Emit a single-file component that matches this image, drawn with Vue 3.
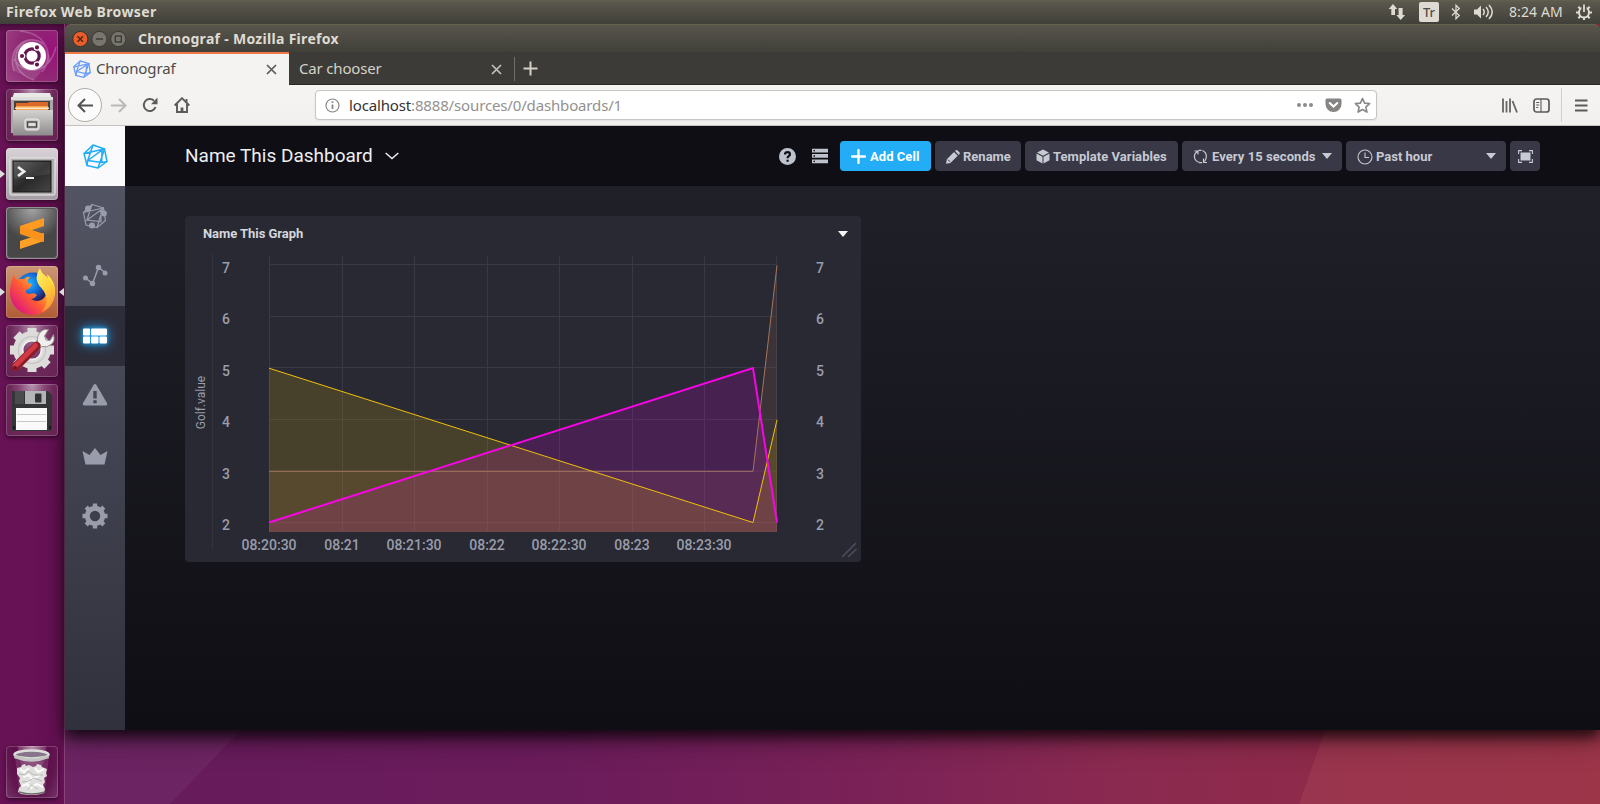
<script setup>
const xs = [269.5, 342.5, 414.5, 487.5, 559.5, 632.5, 704.5, 776.5]
const ys = [264.5, 316.5, 367.5, 419.5, 471, 522.5]
const yLabels = [7, 6, 5, 4, 3, 2].map((value, i) => ({ value, y: 272.5 + i * 51.5 }))
const xLabels = ['08:20:30', '08:21', '08:21:30', '08:22', '08:22:30', '08:23', '08:23:30']
  .map((text, i) => ({ text, x: xs[i] - 0.5 }))

const series = [
  { name: 'tan', color: '#a5755e', fill: '#a77150', width: 1, points: '269,471.3 753,471.3 777,265.5' },
  { name: 'pink', color: '#f904e6', fill: '#f600f6', width: 2, points: '269,522.5 753,368 777,522.5' },
  { name: 'gold', color: '#f2c00c', fill: '#f6c800', width: 1, points: '269,368.2 753,522.5 777,419.8' }
]
const strokes = [series[0], series[2], series[1]]

const navItems = ['hosts', 'data', 'boards', 'alerts', 'crown', 'gear']
const apps = ['dash', 'files', 'terminal', 'sublime', 'firefox', 'settings', 'disk']
</script>

<template>
  <div class="desktop">
    <svg class="wallpaper" width="1600" height="804" viewBox="0 0 1600 804">
      <defs>
        <linearGradient id="wall" x1="0" x2="1">
          <stop offset="0" stop-color="#651b5b" /><stop offset=".35" stop-color="#6b1c5b" />
          <stop offset=".55" stop-color="#7b2257" /><stop offset=".7" stop-color="#8b2a50" />
          <stop offset="1" stop-color="#932a42" />
        </linearGradient>
      </defs>
      <rect width="1600" height="804" fill="url(#wall)" />
      <path d="M0 700H270L170 804H0Z" fill="#fff" opacity=".045" />
      <path d="M1336 700H1600V804H1299Z" fill="#b04b55" opacity=".36" />
    </svg>

    <header class="panel">
      <span class="panel-title">Firefox Web Browser</span>
      <div class="tray">
        <svg width="18" height="18" viewBox="0 0 18 18" fill="#dfdbd2"><path d="M5 1L9.300 6H7v6H3.300V6H.7ZM12.700 17L8.300 12h2.300V5h4v7h2.500Z" /></svg>
        <span class="kbd">Tr</span>
        <svg class="bt" width="10" height="16" viewBox="0 0 10 16" fill="none" stroke="#dfdbd2" stroke-width="1.3"><path d="M1 4.500L8.300 11.500 5 14.700V1.300L8.300 4.500 1 11.500" /></svg>
        <svg class="vol" width="21" height="18" viewBox="0 0 21 18" fill="none" stroke="#dfdbd2" stroke-width="1.500"><path d="M1 6.500h3l4-4v13l-4-4H1Z" fill="#dfdbd2" stroke="none" /><path d="M10 6q2.500 3 0 6M13 4q4.500 5 0 10M16 2q6.500 7 0 14" /></svg>
        <span class="clock">8:24 AM</span>
        <svg width="16" height="16" viewBox="0 0 16 16" fill="none" stroke="#dfdbd2" stroke-width="2"><circle cx="8" cy="8.500" r="5" /><path d="M8 1v7" stroke="#504e47" stroke-width="5" /><path d="M8 .5v7.500" stroke-width="1.800" /><path d="M0 8.500h3M13 8.500h3M8 13v3M2.300 2.800l2 2M13.700 2.800l-2 2M2.300 14.200l2-2M13.700 14.200l-2-2" /></svg>
      </div>
    </header>

    <div class="workspace">
      <aside class="launcher">
        <div v-for="app in apps" :key="app" class="tile" :class="app">
          <svg width="52" height="52" viewBox="0 0 52 52">
            <defs v-if="app === 'dash'">
              <linearGradient id="metal" x2="0" y2="1"><stop stop-color="#d4d3d2" /><stop offset="1" stop-color="#8d8b8b" /></linearGradient>
              <linearGradient id="black" x2="1" y2="1"><stop stop-color="#565656" /><stop offset=".5" stop-color="#292929" /><stop offset="1" stop-color="#454545" /></linearGradient>
              <linearGradient id="fox" x1=".9" y1=".1" x2=".1" y2=".8"><stop stop-color="#fff04a" /><stop offset=".3" stop-color="#ffa92a" /><stop offset=".6" stop-color="#ff5a35" /><stop offset="1" stop-color="#e0187c" /></linearGradient>
              <radialGradient id="globe" cx=".4" cy=".3"><stop stop-color="#25b7ff" /><stop offset=".6" stop-color="#1262d1" /><stop offset="1" stop-color="#29205f" /></radialGradient>
              <linearGradient id="flame" x2=".4" y2="1"><stop stop-color="#fff36b" /><stop offset=".6" stop-color="#ffcf3a" /><stop offset="1" stop-color="#ff9a39" /></linearGradient>
              <radialGradient id="gloss" cx=".5" cy="0" r=".65"><stop stop-color="#fff" stop-opacity=".5" /><stop offset="1" stop-color="#fff" stop-opacity="0" /></radialGradient>
            </defs>
            <template v-if="app === 'dash'">
              <g fill="none" stroke="#fff" stroke-opacity=".22" stroke-width="1.500"><path d="M8 41C0 20 20 1 38 14M14 1C42 4 49 27 36 42M50 17C43 44 19 47 8 29M28 50C5 44 4 16 23 10" /></g>
              <path d="M8 41C0 20 20 1 38 14L45 30 28 50Z" fill="#fff" opacity=".12" />
              <circle cx="26" cy="26" r="14" fill="#fff" />
              <circle cx="26" cy="26" r="7.200" fill="none" stroke="#651650" stroke-width="3.200" />
              <g fill="#651650" stroke="#fff" stroke-width="1.200"><circle cx="16" cy="26" r="2.700" /><circle cx="31" cy="17.400" r="2.700" /><circle cx="31" cy="34.600" r="2.700" /></g>
            </template>
            <template v-else-if="app === 'files'">
              <path d="M8 4h36l3 9H5Z" fill="#e9e9e8" /><path d="M5 9h42v35H5Z" fill="#a9a8a7" /><path d="M5 8h42v3H5Z" fill="#dededd" />
              <path d="M8 12h36v10H8Z" fill="#45413e" /><path d="M10 14h12l1-1h19v8H10Z" fill="#dc692c" /><path d="M10 17h32v5H10Z" fill="#f7a54d" /><path d="M9 18.500h34v1.500H9Z" fill="#fae9cf" />
              <path d="M7 21h40v25.500H7Z" fill="url(#metal)" /><rect x="19" y="30" width="14" height="11" rx="2" fill="#c9c8c7" stroke="#eee" /><rect x="21.500" y="33" width="9" height="5" fill="#ddd" stroke="#4b4947" stroke-width="1.500" />
            </template>
            <template v-else-if="app === 'terminal'">
              <rect x="4" y="10" width="45" height="37" rx="1.500" fill="#b1aeae" stroke="#eee" /><rect x="7" y="13" width="38" height="31" fill="url(#black)" stroke="#161616" />
              <path d="M8 14h36v12L8 31Z" fill="#fff" opacity=".08" /><path d="M12 19l6 4.500-6 4.500" fill="none" stroke="#eee" stroke-width="2.800" /><path d="M20 30h8" stroke="#eee" stroke-width="2" />
            </template>
            <template v-else-if="app === 'sublime'">
              <rect x="1.500" y="1.500" width="49" height="49" rx="3" fill="#474747" stroke="#5c5658" /><rect x="2" y="2" width="48" height="48" rx="3" fill="url(#gloss)" />
              <path d="M14 19L38 11V19L14 27Z" fill="#ff9c20" /><path d="M14 34L38 26V34L14 42Z" fill="#ffa126" /><path d="M14 19v8l24 8v-8Z" fill="#fb921b" />
            </template>
            <template v-else-if="app === 'firefox'">
              <circle cx="27" cy="25" r="18.500" fill="url(#globe)" />
              <path d="M8 8q1 4 3 6 4-2 7-1 3-3 6-2-3 3-2 6 2 1 4 1-1 4-6 6-1 4 4 4 4-2 7 1-3 4-6 4 6 4 12 0 6-6 6-16L41 8q9 8 8 20-3 20-23 21Q7 47 4 29q-.500-11 4-21Z" fill="url(#fox)" />
              <path d="M34 2q1 5 6 8 8 7 8.500 17-1 14-13 19 8-9 4-17-1-4-6-9-6-8 .5-18Z" fill="url(#flame)" />
            </template>
            <template v-else-if="app === 'settings'">
              <g stroke="#dddcdb" fill="none"><circle cx="26" cy="25" r="13.700" stroke-width="10" /><path d="M26 3v8M26 39v8M4 25h8M40 25h8M10.500 9.500l6 6M35.500 34.500l6 6M10.500 40.500l6-6" stroke-width="9" /></g>
              <circle cx="26" cy="25" r="13.500" fill="none" stroke="#c5c4c4" stroke-width="1.200" /><circle cx="26" cy="25" r="9.500" fill="none" stroke="#f3f3f2" stroke-width="1.500" />
              <path d="M29 22.500L37 14.500" stroke="#8d8c8b" stroke-width="7.500" /><path d="M31.500 18q-1-8 4-12 3-2.500 7-1.500l-4 6.500 1.500 4 4 .5 3.500-6q2 7-2.500 10-4 3.500-9 2l-4 3.500-4-4Z" fill="#f0efee" stroke="#8b8888" stroke-width=".9" />
              <path d="M9.500 42L30.500 21" stroke="#8c1d28" stroke-width="8.500" stroke-linecap="round" /><path d="M9 41L29.500 20.500" stroke="#cf3a43" stroke-width="5" stroke-linecap="round" />
              <circle cx="9" cy="42.500" r="1.800" fill="#691525" />
            </template>
            <template v-else-if="app === 'disk'">
              <path d="M6 7h36l4 4v36H6Z" fill="#343537" /><path d="M19 7h21v13H19Z" fill="#b4b5b7" /><rect x="29" y="9.500" width="6.500" height="9" rx="1" fill="#303236" /><path d="M9 7h9v13H9Z" fill="#494b4d" />
              <path d="M10 24h31v22H10Z" fill="#fafafa" /><path d="M11 30.500h29M11 37.500h29" stroke="#c8c8c8" /><path d="M8 42v3M44 42v3" stroke="#000" />
            </template>
          </svg>
          <i v-if="app === 'terminal' || app === 'firefox'" class="pip" />
          <i v-if="app === 'firefox'" class="pip right" />
        </div>
        <div class="tile trash">
          <svg width="52" height="52" viewBox="0 0 52 52">
            <path d="M9 10h34l-4 35q-1 3-13 3t-13-3Z" fill="#8c4f7d" opacity=".45" />
            <path d="M11 22l4-1 1-2 3-1 1 2 3-1 4 2 3-1 1-2 4 1 1 2 5 2-1 4 1 3-3 2 1 4-2 3 2 4-1 4-3 1q-8 2-20 0l-3-2 1-4 2-2-2-5 1-3-3-4Z" fill="#dfe0dd" />
            <g fill="none" stroke="#fafaf9" stroke-width="2.200"><path d="M14 23l4 3 5-4M29 22l3 4 6-3M17 31l6-2 3 4 8-4M16 40l5-2 4 4 6-4 6 3M20 35l4 1" /></g>
            <path d="M13 28l6 1 3-4 6 4 9 0M16 36l7-1 5-3 8 3M22 44l3-5 7 4" fill="none" stroke="#b9bab6" stroke-width="1" />
            <path d="M13 46q13 4 26 0" fill="none" stroke="#6e6e6c" stroke-width="1.500" />
            <ellipse cx="25.500" cy="8.500" rx="17" ry="4" fill="#87768a" stroke="#dedddc" stroke-width="2.500" /><path d="M8.500 10.500q17 7 34 0" fill="none" stroke="#c4c5c3" stroke-width="3.500" />
          </svg>
        </div>
      </aside>

      <main class="window">
        <div class="titlebar">
          <svg width="56" height="18" viewBox="0 0 56 18">
            <circle cx="8.300" cy="9" r="7.600" fill="#e95c2c" stroke="#34332e" /><path d="M5.500 6.200l5.500 5.500m0-5.500l-5.500 5.500" stroke="#552311" stroke-width="1.500" />
            <circle cx="27.400" cy="9" r="7.600" fill="#77756c" stroke="#3a3934" /><path d="M24 9h7" stroke="#393833" stroke-width="1.400" />
            <circle cx="46.300" cy="9" r="7.600" fill="#77756c" stroke="#3a3934" /><rect x="43.300" y="6" width="6" height="6" fill="none" stroke="#393833" stroke-width="1.300" />
          </svg>
          <span>Chronograf - Mozilla Firefox</span>
        </div>

        <div class="tabs">
          <div class="tab current">
            <svg width="18" height="18" viewBox="0 0 25 25" fill="none" stroke="#6b9dfc" stroke-width="1.800">
              <path d="M10 1.300L22 5l2 12.500-9 6.500-11-2.500-3-12Z" /><path d="M1 10l21-5-7 19M19 7L5 16l13 3ZM10 1.300L5 16l-1 6M24 17.500l-6 1.500" />
            </svg>
            <span>Chronograf</span>
            <svg class="close" width="11" height="11" viewBox="0 0 11 11" stroke="#5b5a57" stroke-width="1.700"><path d="M1 1l9 9M10 1l-9 9" /></svg>
          </div>
          <div class="tab">
            <span class="other">Car chooser</span>
            <svg class="close" width="11" height="11" viewBox="0 0 11 11" stroke="#c4c0b8" stroke-width="1.700"><path d="M1 1l9 9M10 1l-9 9" /></svg>
          </div>
          <svg class="plus" width="15" height="15" viewBox="0 0 15 15" stroke="#d3cfc7" stroke-width="2"><path d="M7.500 .5v14M.5 7.500h14" /></svg>
        </div>

        <div class="toolbar">
          <div class="back"><svg width="17" height="15" viewBox="0 0 17 15" fill="none" stroke="#555452" stroke-width="2"><path d="M16 7.500H2M8 1L1.500 7.500 8 14" /></svg></div>
          <svg class="forward" width="17" height="15" viewBox="0 0 17 15" fill="none" stroke="#bab9b6" stroke-width="2"><path d="M1 7.500h14M9 1l6.500 6.500L9 14" /></svg>
          <svg class="reload" width="16" height="16" viewBox="0 0 16 16" fill="none" stroke="#5c5b58" stroke-width="2"><path d="M13.500 10A6 6 0 1 1 12 3.700" /><path d="M15.500 .5v6.800H9Z" fill="#5c5b58" stroke="none" /></svg>
          <svg class="home" width="16" height="16" viewBox="0 0 16 16" fill="none" stroke="#5c5b58" stroke-width="1.900"><path d="M.7 8.500L8 1.200l7.300 7.300M3 7v8h10V7" /><path d="M8 15v-4.500" stroke-width="2.800" /><path d="M12.500 2v3" /></svg>
          <div class="address">
            <svg width="15" height="15" viewBox="0 0 15 15" fill="none" stroke="#8a8988" stroke-width="1.200"><circle cx="7.500" cy="7.500" r="6.500" /><path d="M7.500 6.500V11M7.500 3.300V5" stroke-width="1.800" /></svg>
            <span class="url"><b>localhost</b>:8888/sources/0/dashboards/1</span>
            <svg class="dots" width="16" height="4" viewBox="0 0 16 4" fill="#8c8b8a"><circle cx="2" cy="2" r="2" /><circle cx="8" cy="2" r="2" /><circle cx="14" cy="2" r="2" /></svg>
            <svg class="pocket" width="17" height="15" viewBox="0 0 17 15"><path d="M2 .5h13Q16.500 .5 16.500 2v4a8 8 0 0 1-16 0V2Q.5.500 2 .5Z" fill="#858483" /><path d="M4.700 5l3.800 3.600L12.300 5" fill="none" stroke="#fff" stroke-width="2" stroke-linecap="round" /></svg>
            <svg width="17" height="17" viewBox="0 0 17 17" fill="none" stroke="#8a8988" stroke-width="1.700"><path d="M8.500 1.500l2.100 4.600 5 .6-3.700 3.400 1 5-4.400-2.500-4.400 2.500 1-5L1.400 6.700l5-.6Z" stroke-linejoin="round" /></svg>
          </div>
          <div class="nav-tools">
            <svg width="16" height="15" viewBox="0 0 16 15" fill="none" stroke="#656462" stroke-width="1.800"><path d="M1 .5v14M4.500 3v11.500M8 .5v14M10.500 3l4.500 11.500" /></svg>
            <svg width="17" height="15" viewBox="0 0 17 15" fill="none" stroke="#5c5b59" stroke-width="1.700"><rect x="1" y="1" width="15" height="13" rx="2.500" /><path d="M8 1v13M3.200 4.500h3M3.200 7h3M3.200 9.500h2" stroke-width="1.100" /></svg>
            <i />
            <svg width="13" height="13" viewBox="0 0 13 13" stroke="#5c5b59" stroke-width="2"><path d="M0 1.500h12.500M0 6.500h12.500M0 11.500h12.500" /></svg>
          </div>
        </div>

        <div class="app">
          <nav class="sidebar">
            <div class="brand">
              <svg width="25" height="25" viewBox="0 0 25 25" fill="none" stroke="#22adf6" stroke-width="1.500" stroke-linejoin="round">
                <path d="M10 1L21.500 5l2.500 12.500-9 6.500-11-2.500L1 9.500Z" /><path d="M1 9.500l20.500-4.500-6.500 19M19 6.200L4.700 16.500l14 2ZM10 1L4.700 16.500 4 21.500M24 17.500l-5.500 1" />
              </svg>
            </div>
            <div v-for="item in navItems" :key="item" class="nav-item" :class="{ active: item === 'boards' }">
              <svg width="26" height="26" viewBox="0 0 26 26" fill="#999dab">
                <g v-if="item === 'hosts'"><path d="M10 1.500L21.500 5l2 12.500-8.500 7-11-2.500L1.500 9.500ZM1.500 9.500L21 5l-6 19.500M19 7L5 17l14 1.500ZM10 1.500L5 17" fill="none" stroke="#999dab" stroke-width="1.200" /><circle cx="6" cy="5.500" r="3" /><circle cx="22" cy="10.500" r="2.900" /><circle cx="10" cy="22.500" r="3" /></g>
                <g v-else-if="item === 'data'"><path d="M3.500 15l7 5.500 6-16 6.500 5" fill="none" stroke="#999dab" stroke-width="1.500" /><circle cx="3.500" cy="15" r="2.500" /><circle cx="10.500" cy="20.500" r="2.700" /><circle cx="16.500" cy="4.500" r="2.700" /><circle cx="23" cy="10" r="2.500" /></g>
                <g v-else-if="item === 'boards'" fill="#fff"><rect x="1" y="5.500" width="7" height="7" rx="1" /><rect x="9" y="5.500" width="16" height="7" rx="1" /><rect x="1" y="13.500" width="7" height="7" rx="1" /><rect x="9" y="13.500" width="7.500" height="7" rx="1" /><rect x="17.500" y="13.500" width="7.500" height="7" rx="1" /></g>
                <g v-else-if="item === 'alerts'"><path d="M13 1q1 0 1.600 1.200L25.200 20.500q.5 2-1.500 2H2.300q-2 0-1.500-2L11.400 2.200Q12 1 13 1Z" /><path d="M11.300 8h3.400v7.500h-3.400Zm0 9.200h3.400v3h-3.400Z" fill="#444753" /></g>
                <path v-else-if="item === 'crown'" d="M.5 8l7 4L13 5l5.500 7 7-4-3 13.500h-19Z" />
                <g v-else><circle cx="13" cy="13" r="7.700" fill="none" stroke="#999dab" stroke-width="5" /><path v-for="n in 8" :key="n" d="M10.800 .5h4.400v5h-4.400Z" :transform="`rotate(${n * 45} 13 13)`" /></g>
              </svg>
            </div>
          </nav>

          <section class="content">
            <header class="board-head">
              <h1>Name This Dashboard</h1>
              <svg class="chev" width="14" height="8" viewBox="0 0 14 8" fill="none" stroke="#eeeff2" stroke-width="1.500"><path d="M.7 1L7 6.500 13.300 1" /></svg>
              <div class="actions">
                <svg class="help" width="17" height="17" viewBox="0 0 17 17"><circle cx="8.500" cy="8.500" r="8.500" fill="#bec2cc" /><path d="M6 6.500q.2-2.300 2.600-2.300 2.300 0 2.300 2 0 1.200-1.200 1.900-1.100.700-1.100 2.200M8.600 11.700v2" fill="none" stroke="#0f0e15" stroke-width="2.200" /></svg>
                <svg class="list" width="16" height="16" viewBox="0 0 16 16"><path d="M0 .7h16v3.800H0ZM0 6h16v3.800H0Zm0 5.500h16v3.800H0Z" fill="#bec2cc" /><path d="M1.500 2.600H3M1.500 8H3m-1.500 5.400H3" stroke="#0f0e15" stroke-width="1.400" /></svg>
                <button class="btn add"><svg width="15" height="15" viewBox="0 0 15 15" stroke="#fff" stroke-width="2.300" stroke-linecap="round"><path d="M7.500 1v13M1 7.500h13" /></svg>Add Cell</button>
                <button class="btn rename"><svg width="14" height="14" viewBox="0 0 14 14" fill="#c6cad3"><path d="M0 13.700l.8-4.500L8 2.100l3.700 3.700L4.500 12.900ZM9 1.100l.6-.6q1-.9 2 0l1.800 1.800q.9 1 0 2l-.7.6Z" /><path d="M2 9.700l2 2" stroke="#383846" /></svg>Rename</button>
                <button class="btn template"><svg width="14" height="15" viewBox="0 0 14 15" fill="#c6cad3"><path d="M7 .5l6 3-6 3.300-6-3.300ZM.5 4.600l6 3.200v6.700l-6-3.300ZM13.500 4.600v6.600l-6 3.300V7.800Z" /></svg>Template Variables</button>
                <button class="btn every"><svg width="15" height="15" viewBox="0 0 15 15" fill="none" stroke="#c6cad3" stroke-width="1.200"><path d="M5 2q-5 3-3 8 2 3.500 5.500 3.500M9.500 1.500q5 2.500 3.500 8l-1.500 3M1.500 2H5v3.500M14 13.500h-3.500v-4M5.500 1.300h3M6 13.600h3" /></svg>Every 15 seconds<i class="caret" /></button>
                <button class="btn hour"><svg width="16" height="16" viewBox="0 0 16 16" fill="none" stroke="#c6cad3" stroke-width="1.100"><circle cx="8" cy="8" r="7" /><path d="M8 3.500V8.500h4" /></svg>Past hour<i class="caret" /></button>
                <button class="btn full"><svg width="15" height="13" viewBox="0 0 15 13"><path d="M2.500 2.500h10v8h-10Z" fill="#c6cad3" /><path d="M.6 4V.6H4M11 .6h3.400V4M.6 9v3.400H4M14.400 9v3.400H11" fill="none" stroke="#c6cad3" stroke-width="1.100" /></svg></button>
              </div>
            </header>

            <div class="grid">
              <article class="cell">
                <div class="cell-head"><span>Name This Graph</span><i class="caret" /></div>
                <svg class="chart" width="676" height="310" viewBox="185 252 676 310">
                  <path d="M212.500 254V550" stroke="#32323e" stroke-width="1.500" />
                  <g stroke="#383846">
                    <line v-for="y in ys" :key="y" x1="269" x2="777" :y1="y" :y2="y" />
                    <line v-for="x in xs" :key="x" :x1="x" :x2="x" y1="256" y2="531" />
                  </g>
                  <polygon v-for="s in series" :key="s.name" :points="`269,531.500 ${s.points} 777,531.500`" :fill="s.fill" fill-opacity=".15" />
                  <path d="M269 531.500h508" stroke="#8b5a50" stroke-opacity=".55" />
                  <polyline v-for="s in strokes" :key="s.name" :points="s.points" fill="none" :stroke="s.color" :stroke-width="s.width" />
                  <g class="labels">
                    <template v-for="l in yLabels" :key="l.value">
                      <text x="226" :y="l.y" text-anchor="middle">{{ l.value }}</text>
                      <text x="820" :y="l.y" text-anchor="middle">{{ l.value }}</text>
                    </template>
                    <text v-for="l in xLabels" :key="l.text" :x="l.x" y="550" text-anchor="middle">{{ l.text }}</text>
                    <text class="axis" text-anchor="middle" transform="translate(204.700 402.500) rotate(-90)">Golf.value</text>
                  </g>
                  <path d="M842 557L856 543M848 557L856.500 549" stroke="#4c4c5b" stroke-width="1.700" />
                </svg>
              </article>
            </div>
          </section>
        </div>
      </main>
    </div>
  </div>
</template>

<style>
body { margin: 0; overflow: hidden; }
</style>

<style scoped>
.desktop { position: relative; width: 1600px; height: 804px; overflow: hidden; font-family: "Noto Sans", "Open Sans", sans-serif; box-sizing: border-box; }
.desktop *, .desktop *::before { box-sizing: border-box; }
svg { display: block; flex: none; }
.wallpaper { position: absolute; inset: 0; }
.panel { position: relative; z-index: 3; height: 24px; display: flex; align-items: center; justify-content: space-between; padding: 0 8px 0 6px; background: linear-gradient(#64614f 0, #5b584d 2px, #403f39 100%); color: #dfdbd2; }
.panel-title { font-size: 14px; font-weight: 700; letter-spacing: .38px; line-height: 24px; }
.tray { display: flex; align-items: center; }
.kbd { width: 20px; height: 20px; margin: 0 -1px 0 13px; border-radius: 2px; background: #dfdbd2; color: #504d47; font-size: 13px; font-weight: 500; line-height: 20px; text-align: center; }
.bt { margin-left: 13px; }
.vol { margin-left: 12px; }
.clock { width: 54px; margin: -2px 13px 0 15px; font-size: 14px; letter-spacing: .1px; white-space: nowrap; }
.workspace { position: relative; height: 780px; display: flex; }
.launcher { width: 65px; height: 780px; padding: 6px 6px; display: flex; flex-direction: column; gap: 7px; background: linear-gradient(#0005, transparent 8px), linear-gradient(90deg, #671255, #651153); border-right: 1px solid #8a4479; }
.tile { position: relative; width: 52px; height: 52px; border-radius: 4px; background: radial-gradient(ellipse at 50% 0, #b795ae 0, #864676 35%, #6b2859 60%, #662352); box-shadow: inset 0 0 0 1px #ffffff30, 0 2px 4px #0007; }
.tile.dash { background: radial-gradient(circle at 85% 40%, #98117a, #8e2b74 60%, #a04587); }
.tile.terminal { background: linear-gradient(#d8d3d7, #a49ca4); }
.tile.sublime { background: #777; }
.tile.firefox { background: linear-gradient(#cc9674, #af5c35); }
.tile.trash { margin-top: auto; background: radial-gradient(ellipse at 50% 0, #b795ae, #7a3267 38%, #5c0d4b 40%, #62164f 70%, #75356a); }
.pip { position: absolute; left: -6px; top: 22px; border: solid transparent; border-width: 4px 0 4px 5px; border-left-color: #ddd; }
.pip.right { left: auto; right: -6px; border-width: 4px 5px 4px 0; border-right-color: #ddd; }
.window { width: 1535px; height: 706px; border-radius: 6px 6px 0 0; display: flex; flex-direction: column; box-shadow: 0 7px 14px 0 #000b, 0 12px 30px #0004; }
.titlebar { height: 28px; padding: 1px 0 0 7px; display: flex; align-items: center; gap: 10px; border-radius: 6px 6px 0 0; border-top: 1px solid #66634f; background: linear-gradient(#58554c, #403f39); color: #dfdbd2; font-size: 14px; font-weight: 700; letter-spacing: .3px; white-space: nowrap; }
.titlebar svg { margin-top: -1px; }
.titlebar span { margin-top: -2px; }
.tabs { height: 33px; display: flex; align-items: center; background: #3c3b37; border-bottom: 1px solid #282723; }
.tab { width: 226px; height: 33px; margin-bottom: -1px; display: flex; align-items: center; border-right: 1px solid #6f6e69; color: #d5d1c8; font-size: 15px; letter-spacing: -.18px; }
.tab:not(.current) { height: 24px; margin-top: 1px; }
.tab.current { width: 224px; padding: 0 0 1px 8px; border-top: 2px solid #f07746; border-right: 0; background: #f4f3f2; color: #4c4b48; letter-spacing: -.13px; }
.tab.current span { margin: -2px 0 0 5px; }
.tab.current svg { margin-top: 0; }
.other { margin: -3px 0 0 10px; }
.close { margin: 0 12px 0 auto; }
.plus { margin-left: 8px; }
.toolbar { height: 41px; display: flex; align-items: center; border-bottom: 1px solid #c4c3bf; background: linear-gradient(#f5f4f3, #f1f0ef); }
.back { width: 34px; height: 34px; margin-left: 3px; display: flex; align-items: center; justify-content: center; border: 1px solid #aeadaa; border-radius: 50%; background: #fbfbfb; }
.forward { margin-left: 8px; }
.reload { margin-left: 15px; }
.home { margin-left: 16px; }
.address { width: 1062px; height: 30px; margin-left: 125px; padding: 0 5px 0 9px; display: flex; align-items: center; border: 1px solid #c6c5c1; border-radius: 4px; background: #fff; box-shadow: 0 1px 2px #0001; }
.url { margin-left: 9px; color: #93918f; font-size: 15px; letter-spacing: -.15px; }
.url b { color: #33322f; font-weight: 400; }
.dots { margin-left: auto; }
.pocket { margin: 0 12px; }
.nav-tools { display: flex; align-items: center; margin: 0 12px 0 auto; }
.nav-tools svg + svg { margin-left: 15px; }
.nav-tools i { width: 1px; height: 34px; margin: 0 13px 0 11px; background: #d1d0cd; }
.app { height: 604px; display: flex; font-family: Roboto, sans-serif; }
.sidebar { width: 60px; background: linear-gradient(#565867, #31313d); }
.brand, .nav-item { height: 60px; display: flex; align-items: center; justify-content: center; }
.brand { background: #fafafc; padding: 1px 0 0 1px; }
.nav-item { padding: 0 0 0 1px; }
.nav-item svg { margin-left: -1px; }
.nav-item.active { background: #2d2d39; }
.nav-item.active svg { overflow: visible; filter: drop-shadow(0 0 2px #22adf6) drop-shadow(0 0 6px #2297e6); }
.content { width: 1475px; display: flex; flex-direction: column; }
.board-head { height: 60px; padding: 0 60px; display: flex; align-items: center; background: #0f0e15; }
h1 { margin: 0; color: #eeeff2; font-size: 19px; font-weight: 400; line-height: 24px; white-space: nowrap; }
.chev { margin-left: 12px; }
.actions { margin-left: auto; display: flex; align-items: center; }
.help { margin-right: 16px; }
.list { margin-right: 12px; }
.btn { height: 30px; margin: 0 0 0 4px; padding: 0 11px; display: flex; align-items: center; border: 0; border-radius: 4px; background: #383846; color: #c6cad3; font: 700 13px Roboto, sans-serif; white-space: nowrap; }
.btn svg { margin: 1px 3px 0 0; }
.btn.add { width: 91px; margin-left: 0; background: #22adf6; color: #fff; letter-spacing: .05px; }
.btn.add svg { margin-right: 4px; }
.rename { width: 86px; }
.btn.template { width: 153px; letter-spacing: .05px; }
.btn.every { width: 160px; letter-spacing: .06px; }
.btn.every svg { margin-right: 4px; }
.hour { width: 160px; }
.btn.full { width: 30px; padding: 0 7px 0 8px; }
.btn.full svg { margin: 1px 0 0; }
.caret { width: 0; height: 0; margin-left: auto; border: solid transparent; border-width: 6px 5px 0; border-top-color: #c6cad3; }
.btn .caret { margin-right: -1px; margin-top: -1px; }
.grid { flex: 1; padding: 30px 60px; background: linear-gradient(#202028, #0f0e15); }
.cell { width: 676px; height: 346px; border-radius: 4px; background: #292933; overflow: hidden; }
.cell-head { height: 36px; padding: 0 13px 0 18px; display: flex; align-items: center; color: #d4d7dd; font-size: 13px; font-weight: 700; letter-spacing: -.05px; }
.cell-head span { margin-top: -2px; }
.cell-head .caret { border-top-color: #f6f6f8; }
.labels { fill: #999dab; font: 500 14px Roboto, sans-serif; }
.axis { font-size: 12px; font-weight: 400; }
</style>
